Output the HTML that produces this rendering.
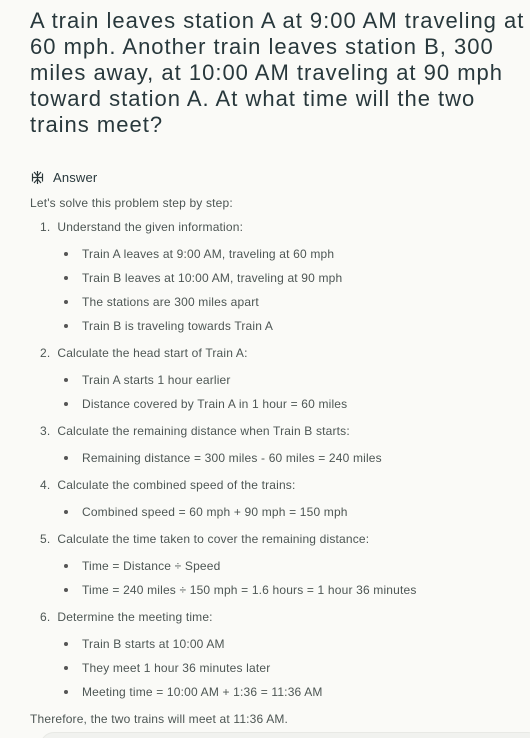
<!DOCTYPE html>
<html><head><meta charset="utf-8"><style>
html{overflow:hidden;height:738px}
body{margin:0;width:530px;height:738px;background:#fafaf7;font-family:"Liberation Sans",sans-serif;position:relative;overflow:hidden}
.h{position:absolute;left:30px;font-size:22px;letter-spacing:1px;color:#28383c;white-space:nowrap;line-height:26px}
.t{position:absolute;font-size:12px;letter-spacing:0.17px;color:#4d5654;white-space:nowrap;line-height:14px}
.b::before{content:"";position:absolute;left:-18px;top:5px;width:4px;height:4px;border-radius:50%;background:#555}
</style></head><body>
<div class="h" style="top:8px">A train leaves station A at 9:00 AM traveling at</div>
<div class="h" style="top:34px">60 mph. Another train leaves station B, 300</div>
<div class="h" style="top:60px">miles away, at 10:00 AM traveling at 90 mph</div>
<div class="h" style="top:86px">toward station A. At what time will the two</div>
<div class="h" style="top:112px">trains meet?</div>
<svg style="position:absolute;left:30px;top:170px" width="15" height="15" viewBox="0 0 15 15" fill="none" stroke="#2a3638" stroke-width="1.2"><path d="M7.5 1v13M3 7.5h9M4 2l3.5 4 3.5-4M4 13l3.5-4 3.5 4M2.5 3.5v8M12.5 3.5v8"/></svg>
<div class="t" style="left:53px;top:171px;font-size:13px;color:#28383c">Answer</div>
<div class="t" style="left:30px;top:196px">Let's solve this problem step by step:</div>
<div class="t" style="left:40px;top:220px">1.&nbsp; Understand the given information:</div>
<div class="t b" style="left:82px;top:247px">Train A leaves at 9:00 AM, traveling at 60 mph</div>
<div class="t b" style="left:82px;top:271px">Train B leaves at 10:00 AM, traveling at 90 mph</div>
<div class="t b" style="left:82px;top:295px">The stations are 300 miles apart</div>
<div class="t b" style="left:82px;top:319px">Train B is traveling towards Train A</div>
<div class="t" style="left:40px;top:346px">2.&nbsp; Calculate the head start of Train A:</div>
<div class="t b" style="left:82px;top:373px">Train A starts 1 hour earlier</div>
<div class="t b" style="left:82px;top:397px">Distance covered by Train A in 1 hour = 60 miles</div>
<div class="t" style="left:40px;top:424px">3.&nbsp; Calculate the remaining distance when Train B starts:</div>
<div class="t b" style="left:82px;top:451px">Remaining distance = 300 miles - 60 miles = 240 miles</div>
<div class="t" style="left:40px;top:478px">4.&nbsp; Calculate the combined speed of the trains:</div>
<div class="t b" style="left:82px;top:505px">Combined speed = 60 mph + 90 mph = 150 mph</div>
<div class="t" style="left:40px;top:532px">5.&nbsp; Calculate the time taken to cover the remaining distance:</div>
<div class="t b" style="left:82px;top:559px">Time = Distance ÷ Speed</div>
<div class="t b" style="left:82px;top:583px">Time = 240 miles ÷ 150 mph = 1.6 hours = 1 hour 36 minutes</div>
<div class="t" style="left:40px;top:610px">6.&nbsp; Determine the meeting time:</div>
<div class="t b" style="left:82px;top:637px">Train B starts at 10:00 AM</div>
<div class="t b" style="left:82px;top:661px">They meet 1 hour 36 minutes later</div>
<div class="t b" style="left:82px;top:685px">Meeting time = 10:00 AM + 1:36 = 11:36 AM</div>
<div class="t" style="left:30px;top:712px">Therefore, the two trains will meet at 11:36 AM.</div>
<div style="position:absolute;left:40px;top:732px;width:500px;height:40px;border-radius:14px;background:#f1f2ef;border:1px solid #e8e9e5"></div>
</body></html>
